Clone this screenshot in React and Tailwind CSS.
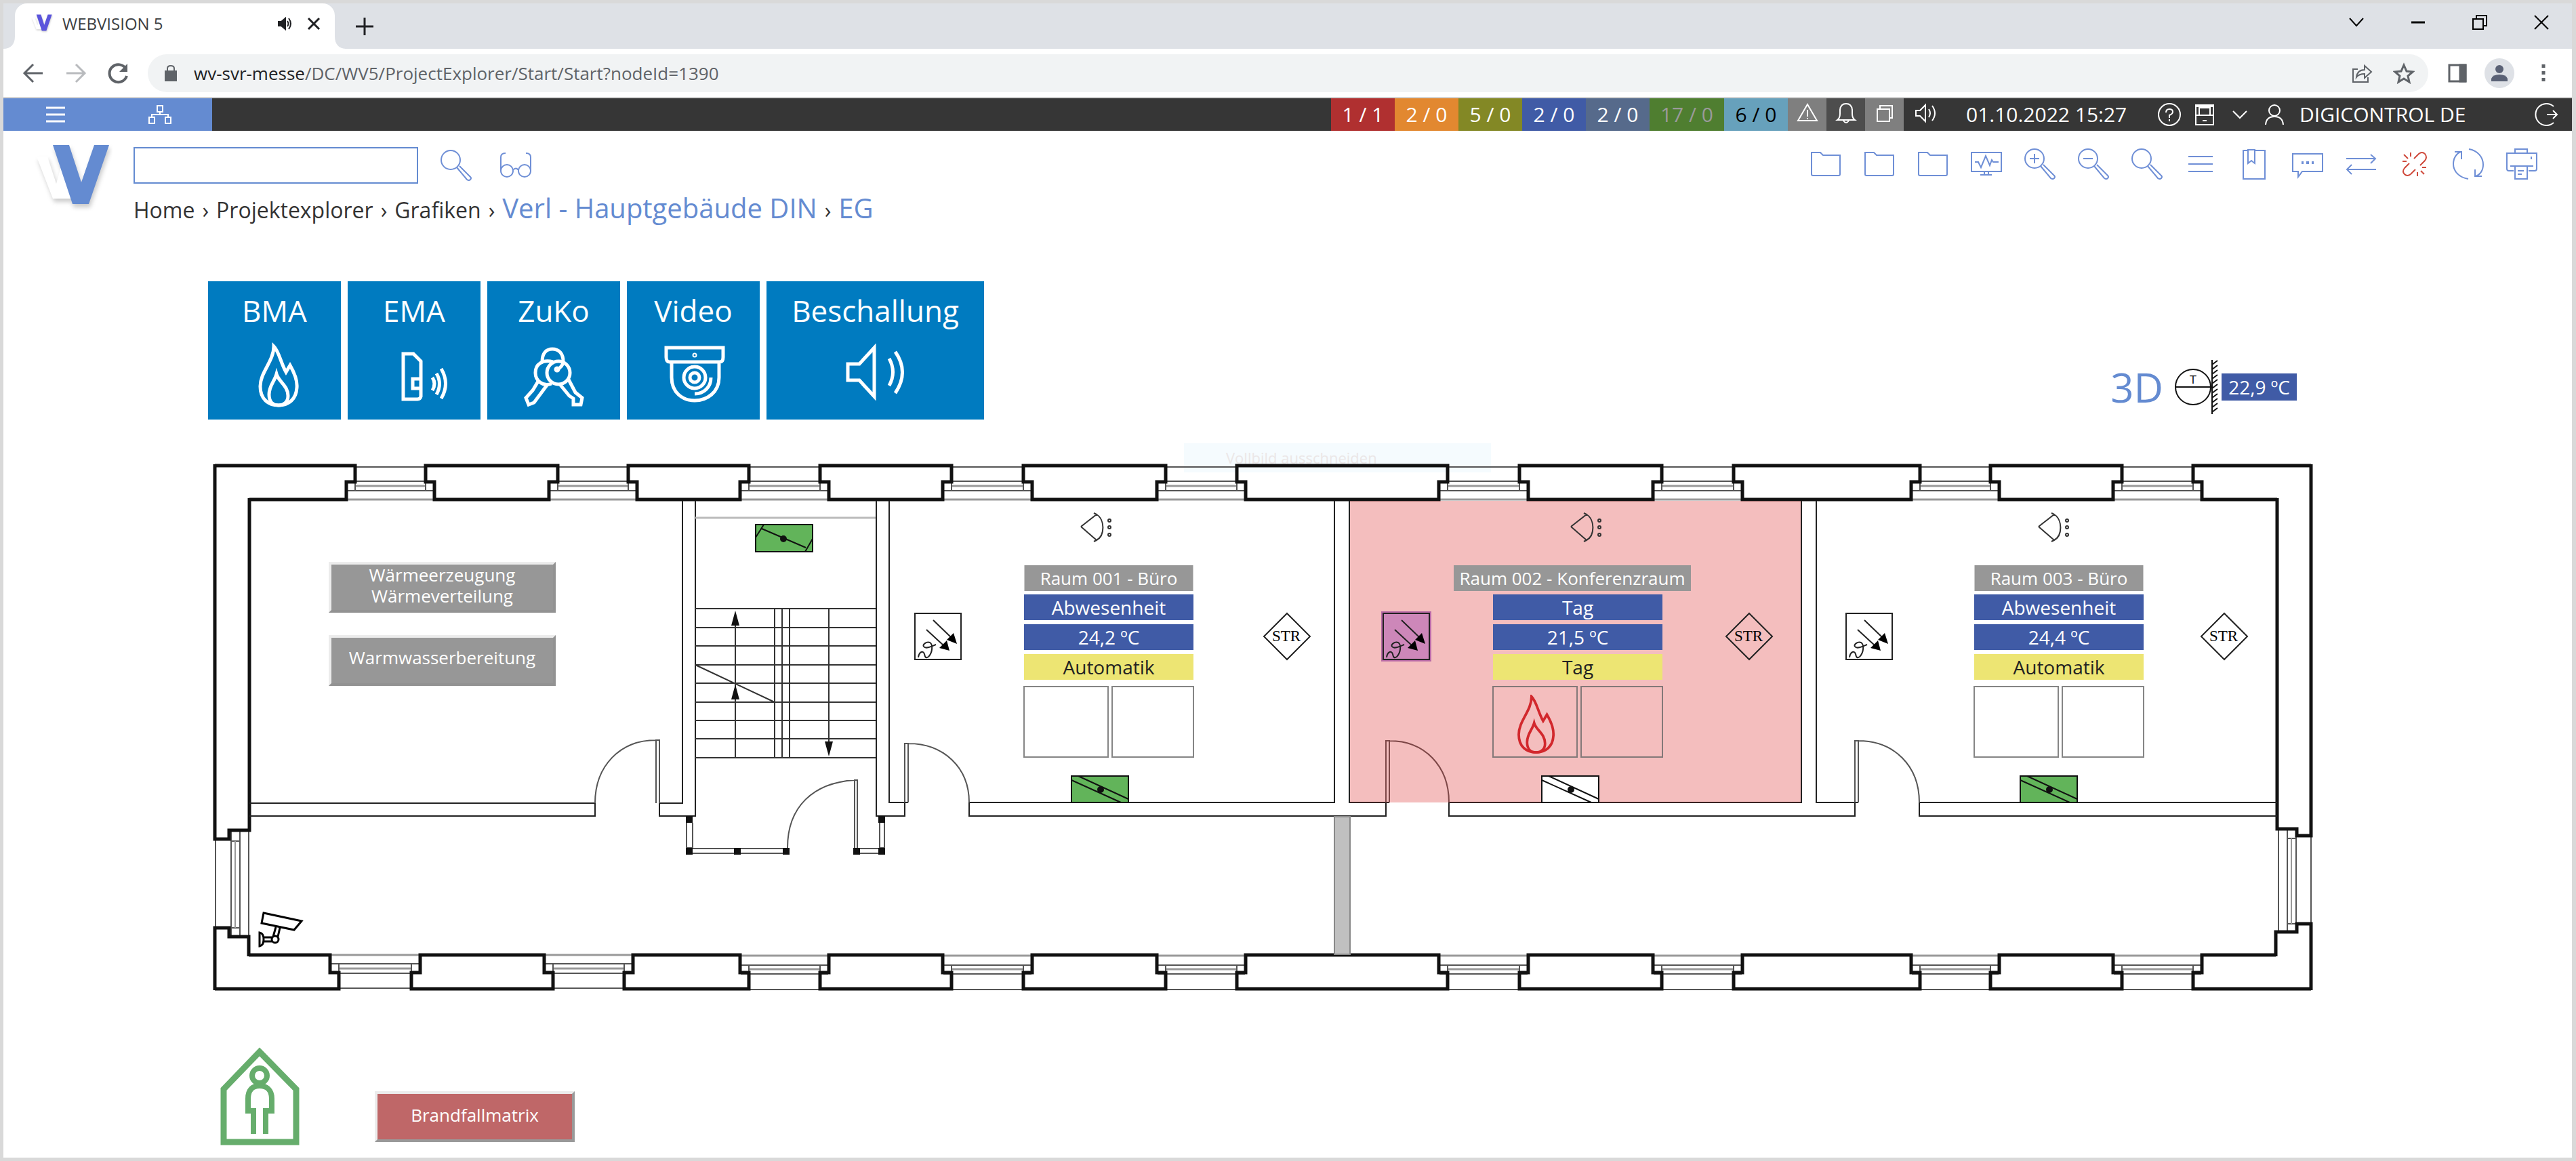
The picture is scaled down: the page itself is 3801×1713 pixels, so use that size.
import React, { useState } from 'react';

const counters = [
  { id: 'alarm', text: '1 / 1', style: 'w-[94px] bg-[#b03030] text-white' },
  { id: 'stoerung', text: '2 / 0', style: 'w-[94px] bg-[#e28830] text-white' },
  { id: 'wartung', text: '5 / 0', style: 'w-[94px] bg-[#838825] text-white' },
  { id: 'hand', text: '2 / 0', style: 'w-[94px] bg-[#405ba6] text-white' },
  { id: 'info', text: '2 / 0', style: 'w-[94px] bg-[#566a8b] text-white' },
  { id: 'ok', text: '17 / 0', style: 'w-[110px] bg-[#4f7e30] text-[#9a9a9a]' },
  { id: 'system', text: '6 / 0', style: 'w-[94px] bg-[#67a1bc] text-black' },
];

// Plan coordinates: outer opening from a to b, the niche is 13 wider on each side
const topWindows = [[524, 628], [823, 927], [1105, 1210], [1404, 1510], [1720, 1825], [2136, 2242], [2452, 2558], [2833, 2937], [3131, 3236]];
const bottomWindows = [[500, 607], [816, 921], [1105, 1210], [1404, 1510], [1720, 1825], [2136, 2242], [2452, 2558], [2833, 2937], [3131, 3236]];

const rooms = [
  { title: 'Raum 001 - Büro', x: 1636, titleX: 1636, titleWidth: 'w-[249px]', mode: 'Abwesenheit', temp: '24,2 ºC', program: 'Automatik', fire: false },
  { title: 'Raum 002 - Konferenzraum', x: 2328, titleX: 2320, titleWidth: 'w-[350px]', mode: 'Tag', temp: '21,5 ºC', program: 'Tag', fire: true },
  { title: 'Raum 003 - Büro', x: 3038, titleX: 3038, titleWidth: 'w-[249px]', mode: 'Abwesenheit', temp: '24,4 ºC', program: 'Automatik', fire: false },
];

const PLAN = { x: 307, y: 680, w: 3108, h: 785 };

const at = (x, y) => ({
  left: `${((x - PLAN.x) / PLAN.w) * 100}%`,
  top: `${((y - PLAN.y) / PLAN.h) * 100}%`,
});

const Icon = ({ size = 'w-[48px] h-[48px]', box = '0 0 48 48', width = 2, children }) => (
  <svg className={`${size} shrink-0`} viewBox={box} fill="none" stroke="currentColor" strokeWidth={width} aria-hidden="true">
    {children}
  </svg>
);

const Logo = ({ size, color }) => (
  <svg className={`${size} shrink-0`} viewBox="0 0 116 112" aria-hidden="true">
    <g style={{ filter: 'drop-shadow(2px 5px 3px rgba(0,0,0,0.2))' }}>
      <path d="M4 26H20L33 66L42 34L58 88H28Z" fill="#fff" />
      <path d="M28 9H52L70 64L89 9H111L81 96H57Z" fill={color} />
    </g>
  </svg>
);

const Flame = () => (
  <>
    <path d="M97 6C105 14 107 30 115 44L121 34C128 46 132 56 131 67C130 84 119 93 104 93C89 93 77 84 77 65C77 44 97 28 97 6Z" />
    <path d="M101 47C104 58 118 64 118 79C118 88 112 93 104 93C96 93 90 88 90 77C90 64 98 58 101 47Z" />
  </>
);

const tiles = [
  { label: 'BMA', width: 'w-[196px]', icon: <Flame /> },
  {
    label: 'EMA',
    width: 'w-[196px]',
    icon: (
      <>
        <path d="M82 17H97L108 28V80Q107 84 103 84H82ZM108 54H96V68H108" />
        <path d="M125 52Q131 61 125 71M131 46Q140 61 131 77M138 39Q151 61 138 83" />
      </>
    ),
  },
  {
    label: 'ZuKo',
    width: 'w-[196px]',
    icon: (
      <>
        <path d="M81 29C81 16 87 10 96 10C106 10 112 17 112 28C112 34 108 37 103 41M95 61C81 66 71 56 71 45C71 32 82 25 97 29" />
        <circle cx="105" cy="45" r="17" />
        <circle cx="103" cy="40" r="2" />
        <path d="M76 56L67 71L57 82L61 92L69 89L89 62M120 55L130 74L140 82L138 92H127V83L121 79L107 62" />
      </>
    ),
  },
  {
    label: 'Video',
    width: 'w-[196px]',
    icon: (
      <>
        <path d="M58 8H142V22Q142 29 137 29H63Q58 29 58 22ZM66 30V52C66 74 82 86 100 86C118 86 136 74 136 52V30" />
        <circle cx="100" cy="52" r="16" />
        <circle cx="100" cy="52" r="7" />
        <path d="M124 52C124 66 114 76 100 76" />
        <circle cx="100" cy="19" r="1" />
      </>
    ),
  },
  {
    label: 'Beschallung',
    width: 'w-[321px]',
    box: '0 0 321 100',
    icon: <path d="M120 32H137L159 8V80L137 56H120ZM181 24Q192 44 181 64M190 14Q211 44 190 75" />,
  },
];

const toolbar = [
  { label: 'Ordner 1', icon: <path d="M3 7H16L20 11H45V39Q45 41 43 41H5Q3 41 3 39Z" /> },
  { label: 'Ordner 2', icon: <path d="M3 7H16L20 11H45V39Q45 41 43 41H5Q3 41 3 39Z" /> },
  { label: 'Ordner 3', icon: <path d="M3 7H16L20 11H45V39Q45 41 43 41H5Q3 41 3 39Z" /> },
  { label: 'Trend', icon: <path d="M2 7H46V35H2ZM21 35V40M27 35V40M15 40H32M7 21H12L16 29L23 12L29 26L32 18L34 21H42" /> },
  { label: 'Vergrößern', icon: <><circle cx="16" cy="16" r="14" /><path d="M25 27L40 45Q43 47 45 45Q47 43 45 41L29 25M9 16H23M16 9V23" /></> },
  { label: 'Verkleinern', icon: <><circle cx="16" cy="16" r="14" /><path d="M25 27L40 45Q43 47 45 45Q47 43 45 41L29 25M9 16H23" /></> },
  { label: 'Zoom', icon: <><circle cx="16" cy="16" r="14" /><path d="M25 27L40 45Q43 47 45 45Q47 43 45 41L29 25" /></> },
  { label: 'Liste', icon: <path d="M6 13H42M6 24H42M6 35H42" /> },
  { label: 'Lesezeichen', icon: <path d="M15 4H8V46H40V4H25M15 3H25V23L20 19L15 23Z" /> },
  { label: 'Kommentar', icon: <><path d="M2 9H46V35H16L10 43V35H2Z" /><path d="M15 22H18M22 22H26M30 22H33" strokeWidth="4" /></> },
  { label: 'Wechseln', icon: <path d="M2 16H45M38 10L45 16L38 23M46 32H4M10 25L3 32L10 39" /> },
  { label: 'Verbindung trennen', red: true, icon: <path d="M23 16L30 9Q35 5 39 9Q43 14 39 19L32 26M16 23L9 30Q5 35 9 39Q13 43 18 39L25 32M18 7V13M8 10L14 16M6 20H12M35 29H41M33 34L38 39M28 36V42" /> },
  { label: 'Aktualisieren', icon: <path d="M25 2C38 4 46 14 46 25C46 34 41 40 35 42M34 32V42H44M24 46C11 44 2 35 2 24C2 15 7 8 13 6M4 6H14V17" /> },
  { label: 'Drucken', icon: <path d="M14 8V2H32V8M12 34H5Q2 34 2 31V8H46V31Q46 34 43 34H34M7 27H41M14 27V46H32V27M18 34H27M18 39H24M38 13V17" /> },
];

const TabStrip = () => (
  <div className="flex h-[67px] bg-[#dee1e6]">
    <svg className="w-[17px] h-[18px] self-end" viewBox="0 0 17 18" fill="#fff" aria-hidden="true"><path d="M17 0V18H0C11 18 17 11 17 0Z" /></svg>
    <div className="flex items-center w-[472px] rounded-t-[18px] bg-white pl-6 pr-5 pb-2">
      <Logo size="w-[32px] h-[31px]" color="#5b55dc" />
      <span className="ml-[14px] text-[24px] leading-[32px] text-[#3c4043]">WEBVISION 5</span>
      <button aria-label="Tab stummschalten" className="ml-auto text-[#202124]">
        <Icon size="w-[22px] h-[22px]" box="0 0 22 22"><path d="M1 8H5L11 3V19L5 14H1Z" fill="currentColor" /><path d="M14 7Q17 11 14 15M16 3Q22 11 16 19" /></Icon>
      </button>
      <button aria-label="Tab schließen" className="ml-5 text-[#202124]">
        <Icon size="w-[22px] h-[22px]" box="0 0 22 22" width={3}><path d="M3 3L19 19M19 3L3 19" /></Icon>
      </button>
    </div>
    <svg className="w-[17px] h-[18px] self-end" viewBox="0 0 17 18" fill="#fff" aria-hidden="true"><path d="M0 0V18H17C6 18 0 11 0 0Z" /></svg>
    <button aria-label="Neuer Tab" className="ml-3 text-[#202124]">
      <Icon size="w-[30px] h-[30px]" box="0 0 30 30" width={3}><path d="M15 2V28M2 15H28" /></Icon>
    </button>
    <div className="ml-auto flex pb-3 text-black">
      <button aria-label="Tabs suchen" className="w-[91px] grid place-items-center"><Icon size="w-[24px] h-[24px]" box="0 0 24 24"><path d="M2 6L12 17L22 6" /></Icon></button>
      <button aria-label="Minimieren" className="w-[91px] grid place-items-center"><Icon size="w-[24px] h-[24px]" box="0 0 24 24" width={3}><path d="M2 12H22" /></Icon></button>
      <button aria-label="Verkleinern" className="w-[91px] grid place-items-center"><Icon size="w-[24px] h-[24px]" box="0 0 24 24"><path d="M2 7H17V22H2ZM7 7V2H22V17H17" /></Icon></button>
      <button aria-label="Schließen" className="w-[91px] grid place-items-center"><Icon size="w-[24px] h-[24px]" box="0 0 24 24"><path d="M2 2L22 22M22 2L2 22" /></Icon></button>
    </div>
  </div>
);

const AddressBar = () => (
  <div className="flex items-center h-[73px] pl-3 pr-2 border-b-2 border-[#d5d5d5] text-[#5f6368]">
    <button aria-label="Zurück" className="w-[63px] grid place-items-center"><Icon size="w-[32px] h-[32px]" box="0 0 32 32" width={3}><path d="M30 16H4M16 3L3 16L16 29" /></Icon></button>
    <button aria-label="Vorwärts" className="w-[63px] grid place-items-center text-[#b9bbbe]"><Icon size="w-[32px] h-[32px]" box="0 0 32 32" width={3}><path d="M2 16H28M16 3L29 16L16 29" /></Icon></button>
    <button aria-label="Neu laden" className="w-[63px] grid place-items-center"><Icon size="w-[32px] h-[32px]" box="0 0 32 32" width={4}><path d="M27 10A13 13 0 1 0 28 20" /><path d="M29 2V14H17Z" fill="currentColor" stroke="none" /></Icon></button>
    <div className="flex flex-1 items-center h-[56px] ml-3 pl-6 pr-5 rounded-full bg-[#f1f3f4]">
      <Icon size="w-[20px] h-[26px]" box="0 0 20 26"><path d="M5 11V6Q5 2 10 2Q15 2 15 6V11" /><path d="M2 10H18V24H2Z" fill="currentColor" /></Icon>
      <div className="ml-6 text-[26px] leading-[36px]">
        <span className="text-[#202124]">wv-svr-messe</span>/DC/WV5/ProjectExplorer/Start/Start?nodeId=1390
      </div>
      <button aria-label="Seite teilen" className="ml-auto"><Icon size="w-[32px] h-[32px]" box="0 0 32 32"><path d="M10 10H3V29H25V22M8 22C9 14 13 11 20 11V5L30 14L20 23V17C14 17 11 18 8 22Z" /></Icon></button>
      <button aria-label="Lesezeichen setzen" className="ml-[30px]"><Icon size="w-[32px] h-[32px]" box="0 0 32 32" width={3}><path d="M16 4L20 13L29 14L22 20L24 29L16 24L8 29L10 20L3 14L12 13Z" /></Icon></button>
    </div>
    <button aria-label="Seitenleiste" className="w-[62px] ml-3 grid place-items-center"><Icon size="w-[30px] h-[30px]" box="0 0 30 30" width={3}><path d="M3 3H27V27H3Z" /><path d="M19 3H27V27H19Z" fill="currentColor" /></Icon></button>
    <button aria-label="Profil" className="w-[62px] grid place-items-center">
      <svg className="w-[44px] h-[44px]" viewBox="0 0 44 44" aria-hidden="true"><circle cx="22" cy="22" r="22" fill="#dee1e6" /><circle cx="22" cy="16" r="6" fill="#5a6175" /><path d="M10 34V30Q12 24 22 24Q32 24 34 30V34Z" fill="#5a6175" /></svg>
    </button>
    <button aria-label="Menü" className="w-[68px] grid place-items-center"><Icon size="w-[8px] h-[28px]" box="0 0 8 28"><path d="M4 1V6M4 11V16M4 21V26" strokeWidth="5" /></Icon></button>
  </div>
);

const AppBar = () => (
  <div className="flex h-[48px] bg-[#363636] text-white text-[30px] leading-[48px]">
    <button aria-label="Menü" className="w-[154px] grid place-items-center bg-[#648bd1]"><Icon size="w-[30px] h-[26px]" box="0 0 30 26" width={3}><path d="M1 3H29M1 13H29M1 23H29" /></Icon></button>
    <button aria-label="Struktur" className="w-[154px] grid place-items-center bg-[#648bd1]"><Icon size="w-[36px] h-[32px]" box="0 0 36 32"><path d="M14 3H22V12H14ZM2 20H10V29H2ZM26 20H34V29H26ZM18 12V16M6 20V16H30V20" /></Icon></button>
    <div className="flex ml-auto">
      {counters.map((c) => (
        <button key={c.id} className={`${c.style} text-center`}>{c.text}</button>
      ))}
      <button aria-label="Warnungen" className="w-[57px] pb-1 grid place-items-center bg-[#7f7f7f]"><Icon size="w-[32px] h-[32px]" box="0 0 32 32"><path d="M16 3L30 27H2ZM16 11V21M16 23V25" /></Icon></button>
      <button aria-label="Meldungen" className="w-[57px] pb-1 grid place-items-center bg-[#4d4d4d]"><Icon size="w-[32px] h-[34px]" box="0 0 32 34"><path d="M3 27Q7 24 7 18V12Q8 3 16 3Q24 3 25 12V18Q25 24 29 27ZM12 28Q16 34 20 28" /></Icon></button>
      <button aria-label="Fenster" className="w-[57px] pb-1 grid place-items-center bg-[#7f7f7f]"><Icon size="w-[30px] h-[30px]" box="0 0 30 30"><path d="M4 9H22V27H4ZM8 9V4H26V22H22" /></Icon></button>
      <button aria-label="Ton" className="w-[66px] pb-1 grid place-items-center"><Icon size="w-[34px] h-[30px]" box="0 0 34 30"><path d="M2 11H8L16 3V27L8 19H2ZM21 9Q25 15 21 21M26 4Q34 15 26 26" /></Icon></button>
      <time className="w-[250px] ml-[26px]" dateTime="2022-10-01T15:27">01.10.2022 15:27</time>
      <button aria-label="Hilfe" className="w-[52px] ml-6 grid place-items-center"><Icon size="w-[36px] h-[36px]" box="0 0 36 36"><circle cx="18" cy="18" r="16" /><path d="M13 15Q13 10 18 10Q23 10 23 14Q23 17 18 19V23M18 25V28" /></Icon></button>
      <button aria-label="Station" className="w-[52px] grid place-items-center"><Icon size="w-[32px] h-[34px]" box="0 0 32 34"><path d="M3 3H29V32H3ZM3 18H29M8 7H24V18H8ZM13 26H19" /><path d="M3 4H29" strokeWidth="4" /></Icon></button>
      <button aria-label="Mehr" className="w-[52px] grid place-items-center"><Icon size="w-[24px] h-[24px]" box="0 0 24 24"><path d="M2 7L12 17L22 7" /></Icon></button>
      <button className="w-[388px] pl-2 flex items-center">
        <Icon size="w-[34px] h-[34px]" box="0 0 34 34"><circle cx="17" cy="11" r="8" /><path d="M4 32Q5 20 17 20Q29 20 30 32" /></Icon>
        <span className="ml-5">DIGICONTROL DE</span>
      </button>
      <button aria-label="Abmelden" className="w-[76px] grid place-items-center"><Icon size="w-[38px] h-[38px]" box="0 0 38 38"><path d="M30 7A16 16 0 1 0 30 31M20 19H35M29 13L35 19L29 25" /></Icon></button>
    </div>
  </div>
);

const Header = () => {
  const [query, setQuery] = useState('');

  return (
    <header className="flex pl-[45px] pr-[35px] pt-3">
      <Logo size="w-[116px] h-[112px]" color="#648bd1" />
      <div className="ml-[31px] pt-3">
        <div className="flex items-center text-[#6f8fd6]">
          <input
            type="text"
            aria-label="Suche"
            className="w-[420px] h-[54px] px-3 border-2 border-[#648bd1] text-[28px] text-black outline-none"
            value={query}
            onChange={(e) => setQuery(e.target.value)}
          />
          <button aria-label="Suchen" className="ml-8"><Icon><circle cx="16" cy="16" r="14" /><path d="M25 27L40 45Q43 47 45 45Q47 43 45 41L29 25" /></Icon></button>
          <button aria-label="Ansicht" className="ml-10"><Icon><circle cx="11" cy="32" r="9" /><circle cx="37" cy="32" r="9" /><path d="M20 31Q24 26 28 31M2 32V12Q2 6 9 6M46 32V12Q46 6 39 6" /></Icon></button>
        </div>
        <nav className="flex items-baseline gap-[11px] mt-3 text-[32px] leading-[48px] text-[#333]">
          <a href="#home">Home</a>
          <span>›</span>
          <a href="#projektexplorer">Projektexplorer</a>
          <span>›</span>
          <a href="#grafiken">Grafiken</a>
          <span>›</span>
          <a href="#verl" className="text-[40px] text-[#648bd1]">Verl - Hauptgebäude DIN</a>
          <span>›</span>
          <a href="#eg" className="text-[40px] text-[#648bd1]">EG</a>
        </nav>
      </div>
      <div className="flex ml-auto pt-[13px] items-start">
        {toolbar.map((t) => (
          <button key={t.label} aria-label={t.label} className={`w-[79px] grid place-items-center ${t.red ? 'text-[#cf4a3c]' : 'text-[#6f8fd6]'}`}>
            <Icon>{t.icon}</Icon>
          </button>
        ))}
      </div>
    </header>
  );
};

const OutdoorTemp = () => (
  <div className="flex items-center mr-[26px]">
    <button className="text-[60px] leading-[60px] text-[#648bd1]">3D</button>
    <svg className="w-[68px] h-[84px] ml-4" viewBox="0 0 68 84" fill="none" stroke="#111" strokeWidth="2" aria-hidden="true">
      <circle cx="28" cy="42" r="26" />
      <path d="M2 42H56M56 2V82" />
      <path d="M56 9L64 3M56 16L64 10M56 23L64 17M56 30L64 24M56 37L64 31M56 44L64 38M56 51L64 45M56 58L64 52M56 65L64 59M56 72L64 66M56 79L64 73" />
      <text x="28" y="37" textAnchor="middle" fontSize="17" fontFamily="Liberation Sans" fill="#111" stroke="none">T</text>
    </svg>
    <span className="ml-[2px] w-[111px] h-[40px] bg-[#405ba6] text-white text-center text-[28px] leading-[40px]">22,9 ºC</span>
  </div>
);

const thin = { stroke: '#555', strokeWidth: 2 };
const grey = { stroke: '#999', strokeWidth: 2 };

// Opening in the outer wall, mirrored for the bottom wall
const Opening = ({ a, b, ys }) => (
  <g>
    <path d={`M${a} ${ys.outer}H${b}M${a - 12} ${ys.frame[0]}H${b + 12}M${a - 12} ${ys.frame[2]}H${b + 12}`} {...thin} />
    <path d={`M${a} ${ys.frame[1]}H${b}M${a - 12} ${ys.inner}H${b + 12}`} {...grey} strokeWidth="3" />
    <path d={`M${a} ${ys.frame[0]}V${ys.frame[2]}M${b} ${ys.frame[0]}V${ys.frame[2]}`} {...thin} />
  </g>
);

const wallPath = (windows, outer, step, inner, start, end) => {
  let outerX = start.outer;
  let innerX = start.inner;
  let d = '';
  windows.forEach(([a, b], i) => {
    if (i === 0) {
      d += `M${outerX} ${outer}H${a}V${step}H${a - 13}V${inner}H${innerX}`;
    } else {
      d += `M${outerX} ${outer}H${a}V${step}H${a - 13}V${inner}H${innerX}V${step}H${outerX}Z`;
    }
    outerX = b;
    innerX = b + 13;
  });
  d += `M${end.outer} ${outer}H${outerX}V${step}H${innerX}V${inner}H${end.inner}`;
  return d;
};

const Sensor = ({ x, active }) => (
  <g transform={`translate(${x} 905)`} fill="none" stroke="#222" strokeWidth="2">
    {active && <rect x="-2" y="-2" width="72" height="72" fill="#cd87b9" stroke="#b86aa6" />}
    <rect x="0" y="0" width="68" height="68" />
    <path d="M27 10L54 36M17 24L43 48" />
    <path d="M62 45L57 29L47 39ZM51 55L47 40L36 51Z" fill="#000" stroke="none" />
    <path d="M5 65C6 57 12 54 14 60C15 66 17 66 20 64C26 58 27 46 22 43C17 41 11 46 13 49C16 53 24 49 31 46" />
  </g>
);

const Motion = ({ x }) => (
  <g transform={`translate(${x} 756)`} fill="none" stroke="#333" strokeWidth="2">
    <path d="M1 21L24 3M1 21L24 41M20 1L24 3C36 10 37 34 24 41L20 43" />
    <circle cx="43" cy="12" r="2" />
    <circle cx="43" cy="22" r="2" />
    <circle cx="43" cy="33" r="2" />
  </g>
);

const Str = ({ x }) => (
  <g transform={`translate(${x} 905)`}>
    <path d="M34 0L68 34L34 68L0 34Z" stroke="#222" strokeWidth="2" />
    <text x="33" y="41" textAnchor="middle" fontSize="23" fontFamily="Liberation Serif" fill="#000">STR</text>
  </g>
);

const Valve = ({ x, fill }) => (
  <g transform={`translate(${x} 1145)`} stroke="#111" strokeWidth="2">
    <rect x="0" y="0" width="84" height="39" fill={fill} />
    <path d="M10 0L84 34M0 6L73 39" />
    <circle cx="43" cy="20" r="4" fill="#111" />
  </g>
);

const PlanDrawing = () => {
  const topYs = { outer: 689, frame: [710, 717, 724], inner: 737 };
  const leftYs = { outer: 1458, frame: [1422, 1429, 1436], inner: 1409 };
  const bottomYs = { outer: 1460, frame: [1424, 1430, 1437], inner: 1410 };

  return (
    <svg className="block w-full h-auto" viewBox={`${PLAN.x} ${PLAN.y} ${PLAN.w} ${PLAN.h}`} fill="none" role="img" aria-label="Grundriss EG">
      {topWindows.map(([a, b]) => <Opening key={a} a={a} b={b} ys={topYs} />)}
      {bottomWindows.map(([a, b], i) => <Opening key={a} a={a} b={b} ys={i < 2 ? leftYs : bottomYs} />)}

      {/* Fenster links und rechts */}
      <path d="M318 1238V1369M341 1225V1382M354 1225V1382M367 1225V1382M341 1241H354M341 1369H354" {...thin} />
      <path d="M347 1241V1369" {...grey} />
      <path d="M3410 1233V1363M3388 1223V1375M3375 1223V1375M3375 1237H3388M3375 1363H3388M3362 1223V1375" {...thin} />
      <path d="M3381 1237V1363" {...grey} />

      <g stroke="#111" strokeWidth="5">
        <path d={wallPath(topWindows, 687, 711, 737, { outer: 317, inner: 368 }, { outer: 3410, inner: 3360 })} />
        <path d={wallPath(bottomWindows, 1459, 1435, 1409, { outer: 317, inner: 367 }, { outer: 3410, inner: 3358 })} />
        <path d="M317 685V1238H338V1225H368V735M317 1461V1369H338V1382H367V1411" />
        <path d="M3410 685V1233H3389V1223H3360V735M3410 1461V1363H3389V1375H3358V1411" />
      </g>

      {/* Innenwände */}
      <g stroke="#222" strokeWidth="2">
        <path d="M368 1185H878V1204H368" />
        <path d="M1007 739V1185H973V1204H1026V739" />
        <path d="M1312 739V1184H1340M1293 739V1204H1335V1184" />
        <path d="M1969 739V1184H1430V1204H2045V1184M1991 739V1184H2050" />
        <path d="M2658 739V1184H2138V1204H2737V1184M2680 739V1184H2742" />
        <path d="M3360 1184H2832V1204H3360" />
      </g>
      <rect x="1969" y="1205" width="23" height="203" fill="#c0c0c0" stroke="#888" strokeWidth="2" />

      {/* Türen */}
      <g {...thin}>
        <path d="M968 1185V1092H973V1185M968 1092C915 1092 878 1130 878 1185" />
        <path d="M1335 1184V1097H1340V1184M1340 1097C1392 1097 1430 1132 1430 1184" />
        <path d="M2045 1184V1093H2050V1184M2050 1093C2102 1093 2138 1130 2138 1184" />
        <path d="M2737 1184V1093H2742V1184M2742 1093C2795 1093 2832 1130 2832 1184" />
        <path d="M1261 1251V1151H1265V1251M1261 1151C1200 1155 1162 1190 1162 1251" />
      </g>

      {/* Windfang */}
      <path d="M1013 1214V1251H1022V1214M1022 1252H1155M1022 1259H1155M1268 1252H1297M1268 1259H1297M1298 1214V1251H1305V1214" {...thin} />
      <g fill="#111">
        <rect x="1012" y="1204" width="10" height="10" />
        <rect x="1012" y="1251" width="10" height="10" />
        <rect x="1083" y="1251" width="10" height="10" />
        <rect x="1155" y="1251" width="10" height="10" />
        <rect x="1259" y="1251" width="10" height="10" />
        <rect x="1296" y="1251" width="10" height="10" />
        <rect x="1296" y="1204" width="10" height="10" />
      </g>

      {/* Treppe */}
      <path d="M1026 764H1292" stroke="#bbb" strokeWidth="3" />
      <g stroke="#333" strokeWidth="2">
        <path d="M1026 898H1292M1026 926H1292M1026 953H1292M1026 981H1292M1026 1008H1292M1026 1036H1292M1026 1063H1292M1026 1090H1292M1026 1118H1292" />
        <path d="M1143 898V1118M1154 898V1118M1165 898V1118M1085 918V1118M1223 898V1100M1026 981L1143 1036" />
      </g>
      <path d="M1085 901L1091 923H1079ZM1085 1010L1091 1032H1079ZM1223 1116L1229 1094H1217Z" fill="#111" />

      <g transform="translate(1115 774)" stroke="#111" strokeWidth="2">
        <rect x="0" y="0" width="84" height="40" fill="#62b45a" />
        <path d="M9 6L74 34M12 0L0 19M84 21L73 40" />
        <circle cx="41" cy="21" r="4" fill="#111" />
      </g>

      {/* Brandalarm Raum 002 */}
      <rect x="1992" y="739" width="665" height="445" fill="#db2828" fillOpacity="0.3" />

      <Motion x={1594} />
      <Motion x={2317} />
      <Motion x={3007} />
      <Sensor x={1350} />
      <Sensor x={2041} active />
      <Sensor x={2724} />
      <Str x={1865} />
      <Str x={2547} />
      <Str x={3248} />
      <Valve x={1581} fill="#62b45a" />
      <Valve x={2275} fill="#fff" />
      <Valve x={2981} fill="#62b45a" />

      <g stroke="#000" strokeWidth="3" fill="#fff">
        <path d="M389 1347L445 1359L434 1372L386 1362ZM407 1368L403 1382M413 1369L410 1382M389 1383H401M389 1389H401" />
        <path d="M383 1376Q389 1377 389 1386Q389 1395 383 1396Z" />
        <circle cx="406" cy="1386" r="5" />
      </g>
    </svg>
  );
};

const Room = ({ room }) => (
  <>
    <div className={`absolute -translate-x-1/2 ${room.titleWidth} h-[38px] bg-[#979797] text-white text-center text-[26px] leading-[38px] font-medium`} style={at(room.titleX, 834)}>
      {room.title}
    </div>
    <div className="absolute -translate-x-1/2 w-[252px]" style={at(room.x, 877)}>
      <div className="flex flex-col gap-[6px] text-center text-[28px] leading-[38px] px-[1px]">
        <div className="h-[38px] bg-[#405ba6] text-white">{room.mode}</div>
        <div className="h-[38px] bg-[#405ba6] text-white">{room.temp}</div>
        <div className="h-[38px] bg-[#ede573] text-[#222]">{room.program}</div>
      </div>
      <div className="flex gap-1 mt-[9px]">
        <div className="flex-1 h-[106px] pt-2 pl-1 border-2 border-[#666]/80 grid place-items-center text-[#d2282d]">
          {room.fire && <Icon size="w-[58px] h-[88px]" box="74 3 61 93" width={4}><Flame /></Icon>}
        </div>
        <div className="flex-1 h-[106px] border-2 border-[#666]/80" />
      </div>
    </div>
  </>
);

const App = () => (
  <div className="min-h-screen bg-white border-[5px] border-r-[6px] border-[#d9d9d9] font-['Open_Sans','Noto_Sans',sans-serif]">
    <TabStrip />
    <AddressBar />
    <AppBar />
    <Header />

    <main className="pl-[302px] pr-[380px] pb-4">
      <div className="flex items-end justify-between mt-[81px]">
        <div className="flex gap-[10px]">
          {tiles.map((tile) => (
            <button key={tile.label} className={`${tile.width} h-[204px] pt-[13px] flex flex-col items-center bg-[#007bc0] text-white text-[44px] leading-[60px]`}>
              {tile.label}
              <svg className="w-full h-[100px] mt-[17px]" viewBox={tile.box || '0 0 196 100'} fill="none" stroke="currentColor" strokeWidth="5" aria-hidden="true">
                {tile.icon}
              </svg>
            </button>
          ))}
        </div>
        <div className="pb-[6px]">
          <OutdoorTemp />
        </div>
      </div>

      <div className="relative mt-[61px]">
        <div className="absolute w-[453px] h-[43px] pl-[62px] bg-[#f5fbfe] text-[#ebe7e7] text-[22px] leading-[43px]" style={at(1747, 654)}>
          Vollbild ausschneiden
        </div>
        <div className="relative">
          <PlanDrawing />
        </div>
        <button className="absolute w-[335px] h-[75px] pb-2 border-4 border-t-[#ececec] border-l-[#ececec] border-b-[#929292] border-r-[#929292] bg-[#979797] text-white text-[26px] leading-[31px]" style={at(485, 829)}>
          Wärmeerzeugung<br />Wärmeverteilung
        </button>
        <button className="absolute w-[335px] h-[75px] pb-2 border-4 border-t-[#ececec] border-l-[#ececec] border-b-[#929292] border-r-[#929292] bg-[#979797] text-white text-[26px] leading-[31px]" style={at(485, 937)}>
          Warmwasserbereitung
        </button>
        {rooms.map((room) => <Room key={room.title} room={room} />)}
      </div>

      <div className="flex items-end mt-20 pl-[18px]">
        <svg className="w-[117px] h-[145px]" viewBox="0 0 117 145" fill="none" stroke="#66ad6c" strokeWidth="9" aria-hidden="true">
          <path d="M58 7L112 62V140H5V62Z" />
          <g strokeWidth="8">
            <circle cx="58" cy="42" r="11" />
            <path d="M49 128V94H41V76C41 63 48 57 58 57C68 57 76 63 76 76V94H67V128" />
          </g>
        </svg>
        <button className="w-[295px] h-[75px] ml-[111px] mb-[5px] pb-1 border-4 border-t-[#ececec] border-l-[#ececec] border-b-[#999] border-r-[#999] bg-[#bf6768] text-white text-[26px] leading-[31px]">
          Brandfallmatrix
        </button>
      </div>
    </main>
  </div>
);

export default App;
